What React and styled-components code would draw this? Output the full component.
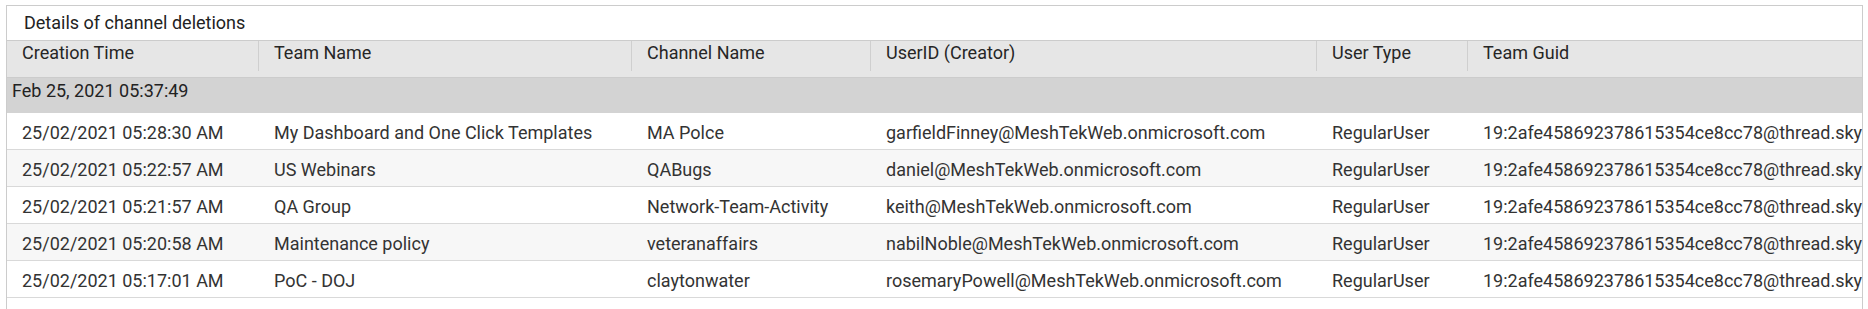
import React from "react";
import styled, { createGlobalStyle } from "styled-components";

const Global = createGlobalStyle`
  html, body { margin: 0; padding: 0; overflow: hidden; background: #fff; }
  body { font-family: Roboto, "Liberation Sans", Arial, sans-serif; }
`;

const COLS = "251px 373px 239px 446px 151px 395px";

const Panel = styled.section`
  margin: 5px 0 0 6px;
  width: 1857px;
  min-height: 312px;
  box-sizing: border-box;
  border: 1px solid #cccccc;
  background: #fff;
  font-size: 18px;
  color: #333;
`;

const Title = styled.div`
  height: 34px;
  line-height: 34px;
  padding-left: 17px;
  color: #222;
`;

const HeaderRow = styled.div`
  display: grid;
  grid-template-columns: ${COLS};
  height: 36px;
  background: #e6e6e6;
  border-top: 1px solid #cccccc;
  border-bottom: 1px solid #cccccc;
  align-items: start;
`;

const HeadCell = styled.div`
  height: 30px;
  box-sizing: border-box;
  padding: 1px 0 0 15px;
  line-height: 21px;
  border-left: ${(p) => (p.$first ? "none" : "1px solid #cfcfcf")};
  color: #262626;
  white-space: nowrap;
  overflow: hidden;
`;

const GroupRow = styled.div`
  height: 35px;
  box-sizing: border-box;
  padding: 2px 0 0 5px;
  line-height: 21px;
  background: #d3d3d3;
  color: #222;
`;

const Row = styled.div`
  display: grid;
  grid-template-columns: ${COLS};
  height: 37px;
  box-sizing: border-box;
  border-bottom: 1px solid #d9d9d9;
  background: ${(p) => (p.$alt ? "#f7f7f7" : "#ffffff")};
  align-items: center;
`;

const Cell = styled.div`
  padding: 3px 0 0 ${(p) => (p.$first ? 15 : 16)}px;
  line-height: 21px;
  white-space: nowrap;
  color: #333;
`;

const headers = [
  "Creation Time",
  "Team Name",
  "Channel Name",
  "UserID (Creator)",
  "User Type",
  "Team Guid",
];

const GUID = "19:2afe458692378615354ce8cc78@thread.sky";

const rows = [
  ["25/02/2021 05:28:30 AM", "My Dashboard and One Click Templates", "MA Polce", "garfieldFinney@MeshTekWeb.onmicrosoft.com", "RegularUser", GUID],
  ["25/02/2021 05:22:57 AM", "US Webinars", "QABugs", "daniel@MeshTekWeb.onmicrosoft.com", "RegularUser", GUID],
  ["25/02/2021 05:21:57 AM", "QA Group", "Network-Team-Activity", "keith@MeshTekWeb.onmicrosoft.com", "RegularUser", GUID],
  ["25/02/2021 05:20:58 AM", "Maintenance policy", "veteranaffairs", "nabilNoble@MeshTekWeb.onmicrosoft.com", "RegularUser", GUID],
  ["25/02/2021 05:17:01 AM", "PoC - DOJ", "claytonwater", "rosemaryPowell@MeshTekWeb.onmicrosoft.com", "RegularUser", GUID],
];

export default function App() {
  return (
    <>
      <Global />
      <Panel>
        <Title>Details of channel deletions</Title>
        <HeaderRow>
          {headers.map((h, i) => (
            <HeadCell key={h} $first={i === 0}>
              {h}
            </HeadCell>
          ))}
        </HeaderRow>
        <GroupRow>Feb 25, 2021 05:37:49</GroupRow>
        {rows.map((r, ri) => (
          <Row key={ri} $alt={ri % 2 === 1}>
            {r.map((c, ci) => (
              <Cell key={ci} $first={ci === 0}>
                {c}
              </Cell>
            ))}
          </Row>
        ))}
      </Panel>
    </>
  );
}
